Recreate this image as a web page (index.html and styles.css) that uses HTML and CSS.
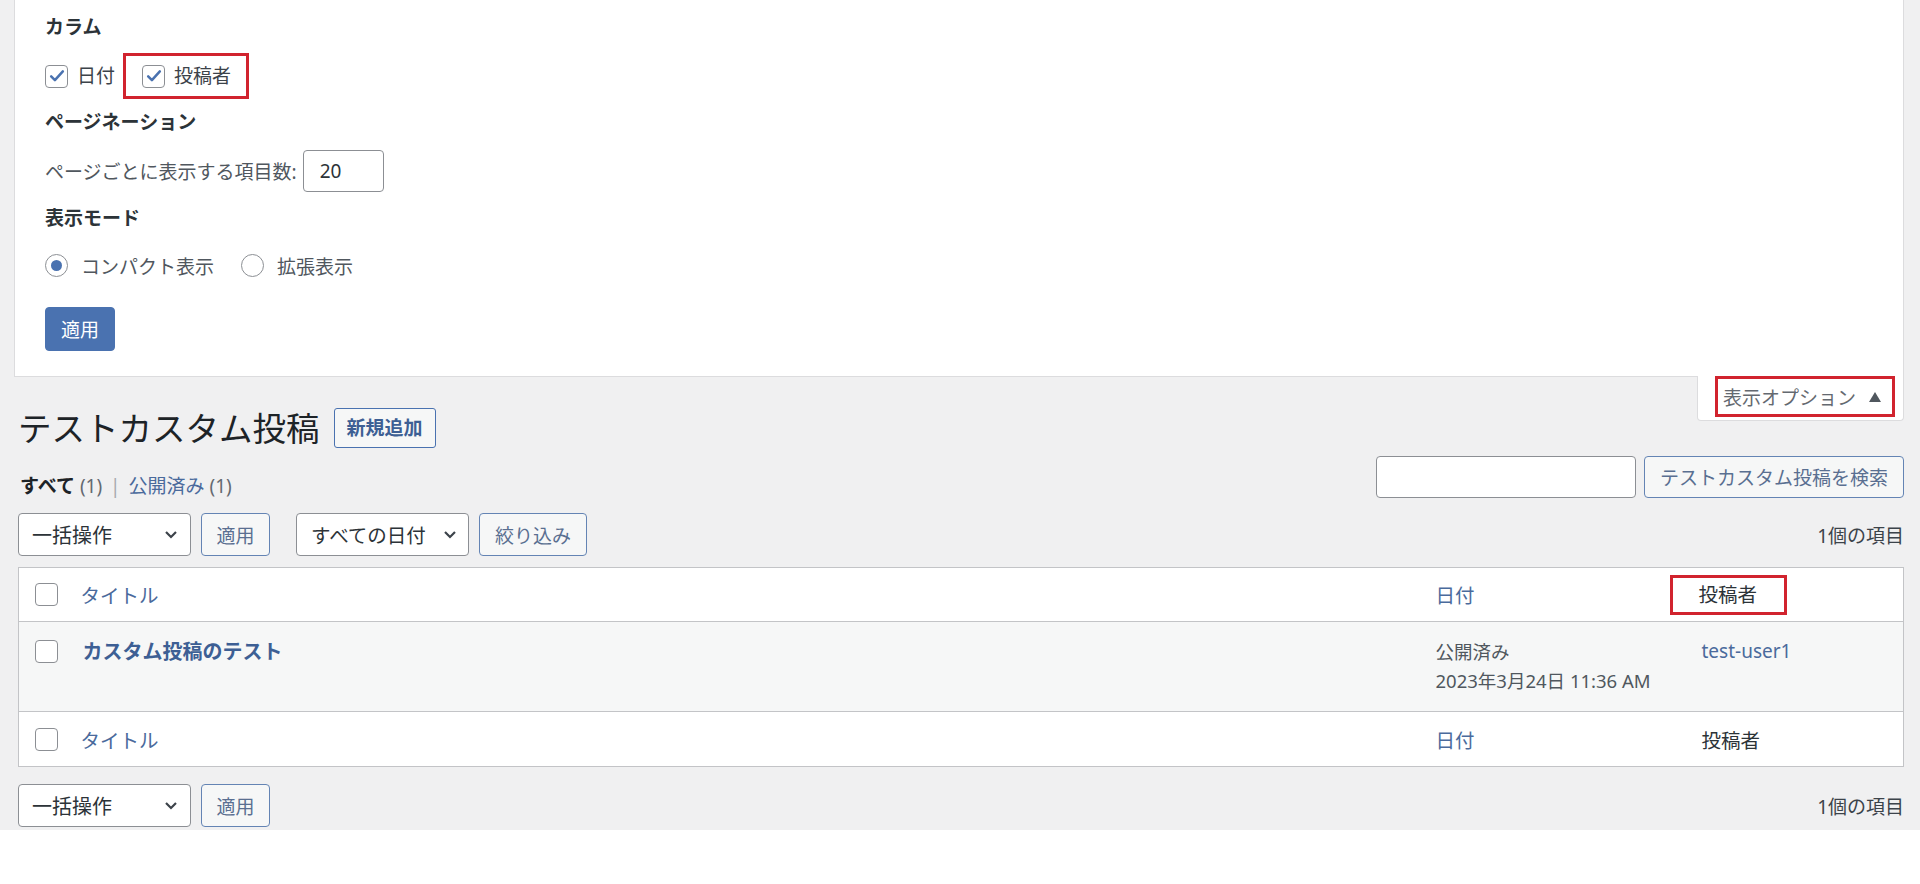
FILE: index.html
```html
<!DOCTYPE html>
<html lang="ja">
<head>
<meta charset="utf-8">
<title>テストカスタム投稿</title>
<link rel="stylesheet" href="styles.css">
</head>
<body>
<div class="page">
  <div class="screen-meta">
    <h5 class="sm-head">カラム</h5>
    <div class="cols-row">
      <label class="cb-label"><span class="cb checked"><svg viewBox="0 0 24 24" width="20" height="20"><path d="M5 12.5l4.5 4.5L19 6.5" fill="none" stroke="#4a72b0" stroke-width="3" stroke-linecap="round" stroke-linejoin="round"/></svg></span>日付</label>
      <label class="cb-label red-box"><span class="cb checked"><svg viewBox="0 0 24 24" width="20" height="20"><path d="M5 12.5l4.5 4.5L19 6.5" fill="none" stroke="#4a72b0" stroke-width="3" stroke-linecap="round" stroke-linejoin="round"/></svg></span>投稿者</label>
    </div>
    <h5 class="sm-head sm-pag">ページネーション</h5>
    <div class="pp-row">
      <span>ページごとに表示する項目数:</span>
      <span class="num-input">20</span>
    </div>
    <h5 class="sm-head sm-mode">表示モード</h5>
    <div class="radio-row">
      <label class="rd-label"><span class="rd on"></span>コンパクト表示</label>
      <label class="rd-label rd-second"><span class="rd"></span>拡張表示</label>
    </div>
    <button class="btn-primary">適用</button>
  </div>

  <div class="wrap">
    <div class="head-row">
      <div class="title-line">
        <h1 class="page-title">テストカスタム投稿</h1>
        <span class="add-new">新規追加</span>
      </div>
      <div class="meta-tab">
        <span class="tab-inner">表示オプション<svg class="tri" viewBox="0 0 12 10" width="12" height="10"><path d="M6 0L12 10H0z" fill="#50575e"/></svg></span>
      </div>
    </div>

    <div class="sub-row">
      <div class="subsubsub"><b class="current">すべて</b> <span class="count">(1)</span> <span class="sep">|</span> <a class="lnk">公開済み</a> <span class="count">(1)</span></div>
      <div class="search-box">
        <span class="search-input"></span>
        <span class="btn">テストカスタム投稿を検索</span>
      </div>
    </div>

    <div class="tablenav">
      <div class="actions">
        <span class="select sel-bulk">一括操作<svg class="chev" viewBox="0 0 14 10" width="14" height="10"><path d="M2 2l5 5 5-5" fill="none" stroke="#3c434a" stroke-width="2.2"/></svg></span>
        <span class="btn btn-apply">適用</span>
        <span class="select sel-date">すべての日付<svg class="chev" viewBox="0 0 14 10" width="14" height="10"><path d="M2 2l5 5 5-5" fill="none" stroke="#3c434a" stroke-width="2.2"/></svg></span>
        <span class="btn btn-filter">絞り込み</span>
      </div>
      <div class="num-items">1個の項目</div>
    </div>

    <table class="list">
      <colgroup><col class="c-cb"><col><col class="c-date"><col class="c-author"></colgroup>
      <thead>
        <tr><td class="cbcell"><span class="tcb"></span></td><th class="lnk">タイトル</th><th class="lnk">日付</th><th><span class="red-box th-box">投稿者</span></th></tr>
      </thead>
      <tbody>
        <tr><td class="cbcell"><span class="tcb"></span></td><td><a class="row-title">カスタム投稿のテスト</a></td><td class="date">公開済み<br>2023年3月24日 11:36 AM</td><td><a class="lnk">test-user1</a></td></tr>
      </tbody>
      <tfoot>
        <tr><td class="cbcell"><span class="tcb"></span></td><th class="lnk">タイトル</th><th class="lnk">日付</th><th>投稿者</th></tr>
      </tfoot>
    </table>

    <div class="tablenav tablenav-bottom">
      <div class="actions">
        <span class="select sel-bulk">一括操作<svg class="chev" viewBox="0 0 14 10" width="14" height="10"><path d="M2 2l5 5 5-5" fill="none" stroke="#3c434a" stroke-width="2.2"/></svg></span>
        <span class="btn btn-apply">適用</span>
      </div>
      <div class="num-items">1個の項目</div>
    </div>
  </div>
</div>
</body>
</html>
```
FILE: styles.css
```css
html, body {
  margin: 0;
  padding: 0;
  background: #ffffff;
}
body {
  font-family: "Noto Sans", "Noto Sans CJK JP", sans-serif;
  color: #3c434a;
  font-size: 19px;
}
.page {
  background: #f0f0f1;
  height: 830px;
  overflow: hidden;
}
.screen-meta {
  background: #fff;
  border: 1px solid #dcdcde;
  border-top: 0;
  margin: 0 16px 0 14px;
  padding: 15px 30px 25px 30px;
  height: 336px;
}
.sm-head {
  margin: 0;
  font-size: 19px;
  font-weight: 700;
  line-height: 24px;
  color: #2c3338;
}
.cols-row {
  display: flex;
  align-items: center;
  margin-top: 14px;
  height: 46px;
}
.cb-label {
  display: flex;
  align-items: center;
  line-height: 24px;
  color: #3c434a;
}
.cb {
  width: 21px;
  height: 21px;
  border: 1px solid #8c8f94;
  border-radius: 4px;
  margin-right: 9px;
  display: flex;
  align-items: center;
  justify-content: center;
  background: #fff;
}
.red-box {
  border: 3px solid #d1232e;
}
.cols-row .red-box {
  margin-left: 8px;
  height: 40px;
  padding: 0 15px 0 16px;
}
.sm-pag { margin-top: 11px; }
.pp-row {
  display: flex;
  align-items: center;
  margin-top: 16px;
  height: 42px;
  color: #50575e;
}
.num-input {
  margin-left: 6px;
  width: 63px;
  height: 40px;
  border: 1px solid #8c8f94;
  border-radius: 4px;
  background: #fff;
  line-height: 40px;
  padding-left: 16px;
  color: #2c3338;
  box-sizing: content-box;
}
.sm-mode { margin-top: 14px; }
.radio-row {
  display: flex;
  align-items: center;
  margin-top: 24px;
  height: 23px;
}
.rd-label {
  display: flex;
  align-items: center;
  color: #50575e;
}
.rd {
  width: 21px;
  height: 21px;
  border: 1px solid #8c8f94;
  border-radius: 50%;
  margin-right: 13px;
  display: flex;
  align-items: center;
  justify-content: center;
  background: #fff;
}
.rd.on::after {
  content: "";
  width: 11px;
  height: 11px;
  border-radius: 50%;
  background: #4a72b0;
}
.rd-second { margin-left: 27px; }
.btn-primary {
  display: block;
  margin-top: 30px;
  width: 70px;
  height: 44px;
  border: 1px solid #4a72b0;
  border-radius: 4px;
  background: #4a72b0;
  color: #fff;
  font: inherit;
  font-size: 19px;
  padding: 0;
}

.wrap {
  margin: 0 16px 0 18px;
}
.head-row {
  display: flex;
  justify-content: space-between;
  align-items: flex-start;
}
.title-line {
  display: flex;
  align-items: center;
  margin-top: 31px;
}
.page-title {
  margin: 0;
  font-size: 33.5px;
  font-weight: 400;
  line-height: 40px;
  color: #1d2327;
}
.add-new {
  margin-left: 14px;
  height: 38px;
  line-height: 38px;
  width: 100px;
  text-align: center;
  border: 1px solid #4a72b0;
  border-radius: 3px;
  background: #f6f7f7;
  color: #3d5f94;
  font-size: 19px;
  font-weight: 700;
}
.meta-tab {
  margin-top: -1px;
  background: #fff;
  border: 1px solid #dcdcde;
  border-top: 0;
  border-radius: 0 0 4px 4px;
  padding: 0 8px 4px 17px;
  height: 40px;
}
.tab-inner {
  display: flex;
  align-items: center;
  height: 35px;
  padding: 0 11px 0 5px;
  border: 3px solid #d1232e;
  color: #646970;
  font-size: 19px;
}
.tri { margin-left: 13px; }

.sub-row {
  display: flex;
  justify-content: space-between;
  align-items: flex-end;
  margin-top: 8px;
}
.subsubsub {
  font-size: 19px;
  line-height: 24px;
  margin-left: 2px;
  color: #646970;
}
.subsubsub .current { color: #1d2327; }
.lnk { color: #4a6a9c; font-weight: 400; text-decoration: none; }
.sep { margin: 0 3px; color: #a7aaad; }
.search-box {
  display: flex;
  gap: 8px;
}
.search-input {
  width: 258px;
  height: 40px;
  border: 1px solid #8c8f94;
  border-radius: 4px;
  background: #fff;
}
.btn {
  display: flex;
  align-items: center;
  justify-content: center;
  height: 40px;
  border: 1px solid #6484b4;
  border-radius: 4px;
  background: #f6f7f7;
  color: #5a6f91;
  font-size: 19px;
}
.search-box .btn { width: 258px; }

.tablenav {
  display: flex;
  justify-content: space-between;
  align-items: center;
  margin-top: 15px;
  height: 43px;
}
.actions {
  display: flex;
  align-items: center;
}
.select {
  display: flex;
  align-items: center;
  justify-content: space-between;
  box-sizing: border-box;
  width: 173px;
  height: 43px;
  border: 1px solid #8c8f94;
  border-radius: 4px;
  background: #fff;
  color: #2c3338;
  font-size: 20px;
  padding: 0 12px 0 13px;
}
.sel-date { margin-left: 26px; padding: 0 11px 0 14px; font-size: 19.5px; }
.btn-apply { width: 67px; height: 41px; margin-left: 10px; }
.btn-filter { width: 106px; height: 41px; margin-left: 10px; }
.num-items {
  color: #3c434a;
  font-size: 19px;
}

.list {
  width: 100%;
  margin-top: 11px;
  border: 1px solid #c3c4c7;
  border-collapse: collapse;
  table-layout: fixed;
  background: #fff;
}
.c-cb { width: 62px; }
.c-date { width: 266px; }
.c-author { width: 202px; }
.list th, .list td {
  text-align: left;
  vertical-align: top;
  font-weight: 400;
  padding: 0;
}
.list thead tr { height: 54px; border-bottom: 1px solid #c3c4c7; }
.list thead th, .list tfoot th {
  vertical-align: middle;
  font-size: 19.5px;
  color: #2c3338;
}
.list thead th.lnk, .list tfoot th.lnk { color: #4a6a9c; }
.list thead td, .list tfoot td { vertical-align: middle; }
.cbcell { padding-left: 16px !important; }
.tcb {
  display: block;
  width: 21px;
  height: 21px;
  border: 1px solid #8c8f94;
  border-radius: 4px;
  background: #fff;
}
.th-box {
  display: inline-block;
  margin-left: -32px;
  padding: 0 27px 0 26px;
  height: 34px;
  line-height: 34px;
}
.list tbody tr {
  height: 90px;
  background: #f6f7f7;
}
.list tbody td { padding-top: 15px; line-height: 29px; }
.list tbody td.cbcell { padding-top: 18px; }
.row-title {
  font-weight: 700;
  font-size: 20px;
  color: #3d5f94;
  margin-left: 2px;
}
.date { color: #50575e; font-size: 18.5px; }
.list tfoot tr { height: 55px; border-top: 1px solid #c3c4c7; }
.tablenav-bottom { margin-top: 17px; }
```
